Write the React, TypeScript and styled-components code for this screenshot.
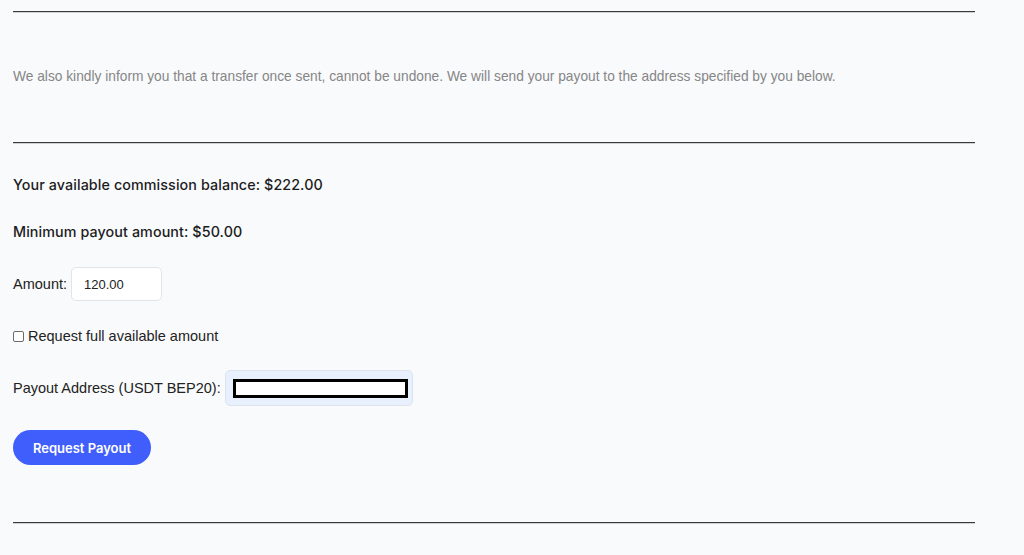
import styled, { createGlobalStyle } from "styled-components";

const GlobalStyle = createGlobalStyle`
  body {
    margin: 0;
    background: #f9fafc;
    font-family: "Liberation Sans", Arial, sans-serif;
  }
`;

const Page = styled.div`
  width: 962px;
  padding: 11px 0 0 13px;
`;

const Rule = styled.hr`
  margin: 0;
  height: 0;
  border: none;
  border-top: 1px solid #3a3a3a;
  border-bottom: 1px solid #cfd1d4;
`;

const Notice = styled.p`
  margin: 54px 0 0;
  height: 75px;
  font-size: 13.75px;
  line-height: 20px;
  color: #868686;
`;

const Stat = styled.p<{ $top: number }>`
  margin: ${(p) => p.$top}px 0 0;
  font-family: Inter, "Open Sans", sans-serif;
  font-weight: 500;
  font-size: 14.3px;
  line-height: 20px;
  color: #1c1c1c;
  letter-spacing: 0.1px;
`;

const Field = styled.label<{ $top: number }>`
  display: flex;
  align-items: center;
  gap: 4px;
  margin-top: ${(p) => p.$top}px;
  font-size: 14.5px;
  color: #222;
`;

const AmountInput = styled.div`
  width: 91px;
  height: 34px;
  box-sizing: border-box;
  display: flex;
  align-items: center;
  padding-left: 12px;
  background: #fff;
  border: 1px solid #e2e4e8;
  border-radius: 5px;
  font-size: 13px;
  color: #222;
`;

const Check = styled.span`
  width: 11px;
  height: 11px;
  box-sizing: border-box;
  border: 1px solid #6b6b6b;
  border-radius: 2px;
  background: #fff;
  margin-right: 0;
`;

const AddressInput = styled.div`
  width: 188px;
  height: 36px;
  box-sizing: border-box;
  display: flex;
  align-items: center;
  padding-left: 7px;
  background: #e8f0fe;
  border: 1px solid #dde3ee;
  border-radius: 5px;
`;

const Redacted = styled.div`
  width: 175px;
  height: 19px;
  box-sizing: border-box;
  border: 3px solid #000;
  background: #fff;
`;

const Button = styled.button`
  display: block;
  margin: 24px 0 57px;
  width: 138px;
  height: 35px;
  border: none;
  border-radius: 18px;
  background: #3f5efb;
  color: #fff;
  font-family: Inter, "Open Sans", sans-serif;
  font-weight: 600;
  font-size: 13px;
`;

export default function App() {
  return (
    <>
      <GlobalStyle />
      <Page>
        <Rule />
        <Notice>
          We also kindly inform you that a transfer once sent, cannot be undone.
          We will send your payout to the address specified by you below.
        </Notice>
        <Rule />
        <Stat $top={31}>Your available commission balance: $222.00</Stat>
        <Stat $top={27}>Minimum payout amount: $50.00</Stat>
        <Field $top={25}>
          Amount: <AmountInput>120.00</AmountInput>
        </Field>
        <Field $top={27}>
          <Check />
          Request full available amount
        </Field>
        <Field $top={26}>
          Payout Address (USDT BEP20):
          <AddressInput>
            <Redacted />
          </AddressInput>
        </Field>
        <Button>Request Payout</Button>
        <Rule />
      </Page>
    </>
  );
}
